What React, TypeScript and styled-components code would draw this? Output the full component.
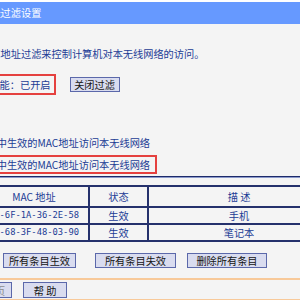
import styled, { createGlobalStyle } from "styled-components";

const GlobalStyle = createGlobalStyle`
  html, body {
    margin: 0;
    padding: 0;
    background: #f4f4f4;
  }
  body {
    font-family: "Noto Sans CJK SC", "Liberation Sans", sans-serif;
  }
`;

const Viewport = styled.div`
  width: 300px;
  height: 300px;
  overflow: hidden;
  background: #f4f4f4;
`;

// the shot is cropped: the page's left edge lies outside the view
const Page = styled.div`
  width: 480px;
  margin-left: -61px;
  border-top: 2px solid #fff;
  font-size: 10.2px;
  color: #1c3c94;
`;

const TitleBar = styled.div`
  height: 22px;
  line-height: 22px;
  background: #6699ff;
  color: #fff;
  white-space: nowrap;
`;

const Body = styled.div`
  display: flex;
  flex-direction: column;
  align-items: flex-start;
`;

const Intro = styled.p`
  margin: 23px 0 0;
  line-height: 14px;
  white-space: nowrap;
`;

const StatusRow = styled.div`
  display: flex;
  align-items: center;
  margin-top: 13px;
`;

const Marked = styled.div<{ $on?: boolean }>`
  display: flex;
  align-items: center;
  height: 17px;
  padding-right: 3px;
  border: 2px solid ${(p) => (p.$on ? "#e5413f" : "transparent")};
  white-space: nowrap;
`;

const Label = styled.span<{ $w: number }>`
  display: flex;
  justify-content: flex-end;
  width: ${(p) => p.$w}px;
  white-space: nowrap;
`;

const Button = styled.button<{ $gap?: number; $w?: number }>`
  height: 15px;
  width: ${(p) => (p.$w ? `${p.$w}px` : "auto")};
  margin-left: ${(p) => p.$gap ?? 0}px;
  padding: 0 2px;
  font-family: inherit;
  font-size: 10.2px;
  line-height: 13px;
  color: #151515;
  background: #d9dcef;
  border: 1px solid #5b68aa;
  border-radius: 0;
  white-space: nowrap;
  &:disabled {
    color: #8c8c8c;
  }
`;

const RuleList = styled.div`
  display: flex;
  flex-direction: column;
  gap: 3px;
  margin-top: 38px;
`;

const RuleRow = styled(Marked)`
  height: 15px;
  padding-right: 5px;
`;

const Radio = styled.span<{ $checked?: boolean }>`
  width: 10px;
  height: 10px;
  margin-right: 5px;
  box-sizing: border-box;
  border-radius: 50%;
  border: 1px solid #7d8aa6;
  background: ${(p) =>
    p.$checked ? "radial-gradient(circle, #2a2a2a 0 2px, #fff 2.6px)" : "#fff"};
`;

const Separator = styled.div`
  align-self: stretch;
  margin-top: 2px;
  border-top: 1px solid #1d2a6a;
  border-bottom: 1px solid #8c9acb;
`;

const Table = styled.table`
  margin-top: 7px;
  width: 480px;
  table-layout: fixed;
  border-collapse: collapse;
`;

const Th = styled.th`
  height: 19px;
  padding: 0;
  border: 2px solid #25316c;
  font-weight: normal;
  text-align: center;
  white-space: nowrap;
`;

const Td = styled.td<{ $mono?: boolean }>`
  height: 15px;
  padding: 0;
  border: 2px solid #25316c;
  text-align: center;
  white-space: nowrap;
  line-height: 13px;
  font-family: ${(p) =>
    p.$mono ? '"DejaVu Sans Mono", monospace' : "inherit"};
  font-size: ${(p) => (p.$mono ? "8.8px" : "inherit")};
`;

const ButtonRow = styled.div`
  display: flex;
  margin-top: 11px;
`;

const OrangeRule = styled.div<{ $top: number }>`
  align-self: stretch;
  margin-top: ${(p) => p.$top}px;
  border-top: 2px solid #f8c999;
`;

const NavRow = styled.div`
  display: flex;
  margin-top: 2px;
  padding-left: 29px;
`;

const NavButton = styled(Button)`
  width: 44px;
  height: 16px;
  padding: 0;
`;

const entries = [
  { id: 1, mac: "40-6F-1A-36-2E-58", on: "生效", desc: "手机" },
  { id: 2, mac: "1C-68-3F-48-03-90", on: "生效", desc: "笔记本" },
];

export default function App() {
  return (
    <Viewport>
      <GlobalStyle />
      <Page>
        <TitleBar>无线MAC地址过滤设置</TitleBar>
        <Body>
          <Intro>本页设置MAC地址过滤来控制计算机对本无线网络的访问。</Intro>
          <StatusRow>
            <Marked $on>
              <Label $w={79}>MAC地址过滤功能：</Label>
              已开启
            </Marked>
            <Button $gap={14} $w={50}>
              关闭过滤
            </Button>
          </StatusRow>
          <RuleList>
            <RuleRow>
              <Radio />
              禁止列表中生效的MAC地址访问本无线网络
            </RuleRow>
            <RuleRow $on>
              <Radio $checked />
              允许列表中生效的MAC地址访问本无线网络
            </RuleRow>
          </RuleList>
          <Separator />
          <Table>
            <colgroup>
              <col style={{ width: 39 }} />
              <col style={{ width: 110 }} />
              <col style={{ width: 59 }} />
              <col style={{ width: 182 }} />
              <col style={{ width: 90 }} />
            </colgroup>
            <thead>
              <tr>
                <Th>ID</Th>
                <Th>MAC 地址</Th>
                <Th>状态</Th>
                <Th>描 述</Th>
                <Th>编辑</Th>
              </tr>
            </thead>
            <tbody>
              {entries.map((e) => (
                <tr key={e.id}>
                  <Td>{e.id}</Td>
                  <Td $mono>{e.mac}</Td>
                  <Td>{e.on}</Td>
                  <Td>{e.desc}</Td>
                  <Td>编辑 删除</Td>
                </tr>
              ))}
            </tbody>
          </Table>
          <ButtonRow>
            <Button $w={57}>添加新条目</Button>
            <Button $gap={7} $w={73}>
              所有条目生效
            </Button>
            <Button $gap={19} $w={81}>
              所有条目失效
            </Button>
            <Button $gap={11} $w={80}>
              删除所有条目
            </Button>
          </ButtonRow>
          <OrangeRule $top={10} />
          <NavRow>
            <NavButton disabled>上一页</NavButton>
            <NavButton $gap={11}>帮 助</NavButton>
          </NavRow>
          <OrangeRule $top={1} />
        </Body>
      </Page>
    </Viewport>
  );
}
